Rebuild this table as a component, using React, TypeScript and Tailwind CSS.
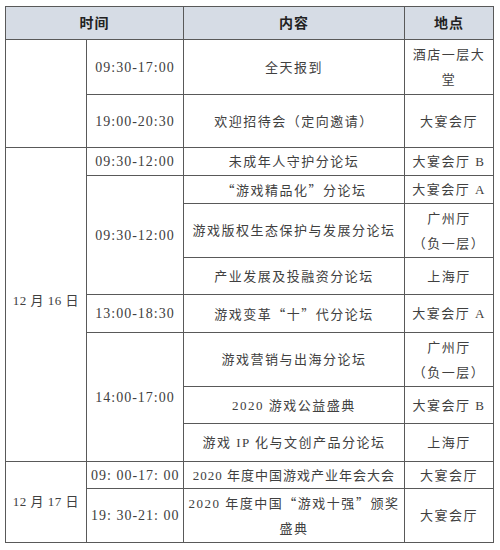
import type { ReactNode } from "react";

const cell = "border border-[#595959] text-center align-middle px-[4px]";
const timeCell = `${cell} text-[14px] tracking-[1px] whitespace-nowrap`;
const textCell = `${cell} text-[13px] tracking-[1.5px] leading-[25px]`;
const dateCell = `${cell} text-[13px] tracking-[0.5px] whitespace-nowrap`;

// full-width curly quotes come from the CJK face
function Q({ children }: { children: ReactNode }) {
  return <span className="font-['Noto_Sans_CJK_SC']">{children}</span>;
}

function App() {
  return (
    <div className="min-h-screen bg-white pt-[6px] pl-[5px]">
      <table
        className="table-fixed border-collapse w-[488px] text-[#404040]"
        style={{ fontFamily: '"Liberation Serif", "Noto Sans CJK SC", serif' }}
      >
        <colgroup>
          <col className="w-[81px]" />
          <col className="w-[97px]" />
          <col className="w-[221px]" />
          <col className="w-[89px]" />
        </colgroup>
        <thead>
          <tr className="h-[33px] bg-[#d6dce5] text-[#222]">
            <th colSpan={2} className={`${cell} text-[14px] font-bold tracking-[1px]`}>
              时间
            </th>
            <th className={`${cell} text-[14px] font-bold tracking-[1px]`}>内容</th>
            <th className={`${cell} text-[14px] font-bold tracking-[1px]`}>地点</th>
          </tr>
        </thead>
        <tbody>
          <tr className="h-[55px]">
            <td rowSpan={2} className={cell}></td>
            <td className={timeCell}>09:30-17:00</td>
            <td className={textCell}>全天报到</td>
            <td className={textCell}>酒店一层大堂</td>
          </tr>
          <tr className="h-[53px]">
            <td className={timeCell}>19:00-20:30</td>
            <td className={textCell}>欢迎招待会（定向邀请）</td>
            <td className={textCell}>大宴会厅</td>
          </tr>

          <tr className="h-[28px]">
            <td rowSpan={8} className={`${dateCell} pb-[8px]`}>
              12 月 16 日
            </td>
            <td className={timeCell}>09:30-12:00</td>
            <td className={textCell}>未成年人守护分论坛</td>
            <td className={textCell}>大宴会厅 B</td>
          </tr>
          <tr className="h-[28px]">
            <td rowSpan={3} className={timeCell}>
              09:30-12:00
            </td>
            <td className={textCell}>
              <Q>“</Q>游戏精品化<Q>”</Q>分论坛
            </td>
            <td className={textCell}>大宴会厅 A</td>
          </tr>
          <tr className="h-[54px]">
            <td className={textCell}>游戏版权生态保护与发展分论坛</td>
            <td className={textCell}>
              广州厅
              <br />
              （负一层）
            </td>
          </tr>
          <tr className="h-[37px]">
            <td className={textCell}>产业发展及投融资分论坛</td>
            <td className={textCell}>上海厅</td>
          </tr>
          <tr className="h-[38px]">
            <td className={timeCell}>13:00-18:30</td>
            <td className={textCell}>
              游戏变革<Q>“</Q>十<Q>”</Q>代分论坛
            </td>
            <td className={textCell}>大宴会厅 A</td>
          </tr>
          <tr className="h-[54px]">
            <td rowSpan={3} className={timeCell}>
              14:00-17:00
            </td>
            <td className={textCell}>游戏营销与出海分论坛</td>
            <td className={textCell}>
              广州厅
              <br />
              （负一层）
            </td>
          </tr>
          <tr className="h-[37px]">
            <td className={textCell}>2020 游戏公益盛典</td>
            <td className={textCell}>大宴会厅 B</td>
          </tr>
          <tr className="h-[38px]">
            <td className={textCell}>游戏 IP 化与文创产品分论坛</td>
            <td className={textCell}>上海厅</td>
          </tr>

          <tr className="h-[27px]">
            <td rowSpan={2} className={dateCell}>
              12 月 17 日
            </td>
            <td className={`${timeCell} tracking-[0.5px]`}>09: 00-17: 00</td>
            <td className={`${textCell} tracking-[1px]`}>2020 年度中国游戏产业年会大会</td>
            <td className={textCell}>大宴会厅</td>
          </tr>
          <tr className="h-[54px]">
            <td className={`${timeCell} tracking-[0.5px]`}>19: 30-21: 00</td>
            <td className={textCell}>
              2020 年度中国<Q>“</Q>游戏十强<Q>”</Q>颁奖
              <br />
              盛典
            </td>
            <td className={textCell}>大宴会厅</td>
          </tr>
        </tbody>
      </table>
    </div>
  );
}

export default App;
